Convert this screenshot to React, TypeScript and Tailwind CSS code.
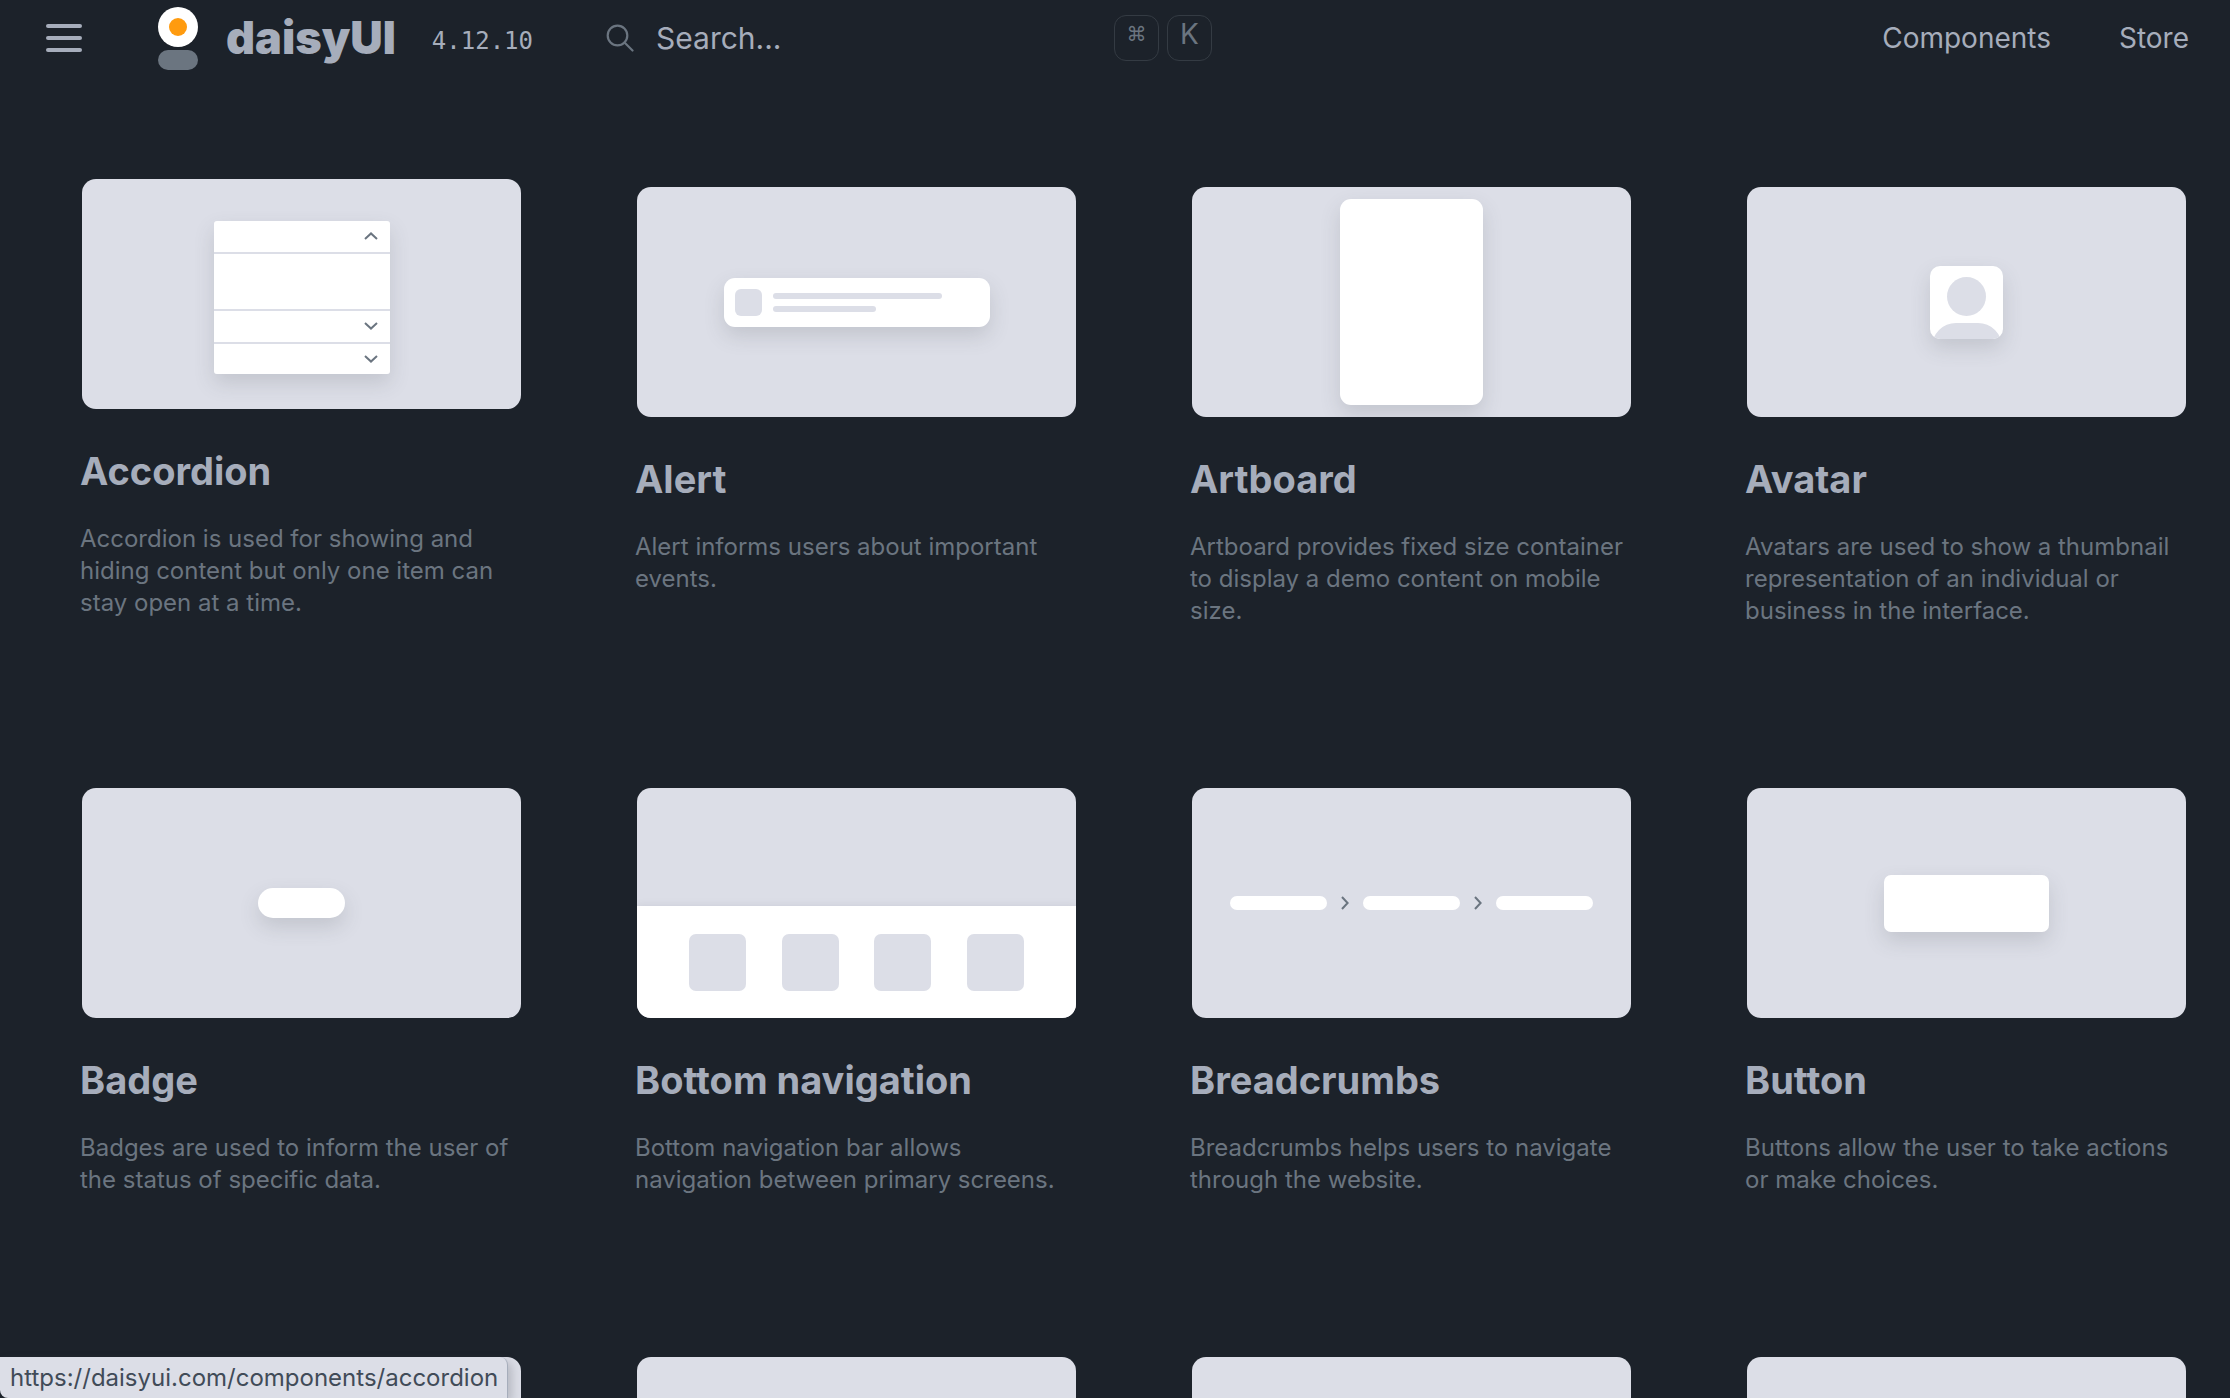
import type { ReactNode } from 'react';
import clsx from 'clsx';

type ComponentItem = {
  name: string;
  description: string;
  preview: ReactNode;
  raised?: boolean;
}

const previewShadow = 'shadow-[0_9px_20px_rgba(70,75,85,0.17)]';

const Chevron = ({ className }: { className?: string }) => (
  <svg viewBox="0 0 14 8" className={clsx('h-2 w-3.5 text-[#6b7580]', className)} fill="none" stroke="currentColor" strokeWidth="2">
    <path d="M1 7 7 1.4 13 7" />
  </svg>
);

const AccordionPreview = () => (
  <div className={clsx('mt-1.5 flex w-44 flex-col gap-0.5 overflow-hidden rounded-[3px] bg-[#dcdee7]', previewShadow)}>
    <div className="flex h-[31px] items-center justify-end bg-white pr-3">
      <Chevron />
    </div>
    <div className="h-[55px] bg-white" />
    <div className="flex h-[31px] items-center justify-end bg-white pr-3">
      <Chevron className="rotate-180" />
    </div>
    <div className="flex h-[30px] items-center justify-end bg-white pr-3">
      <Chevron className="rotate-180" />
    </div>
  </div>
);

const AlertPreview = () => (
  <div className={clsx('flex h-[49px] w-[266px] items-center gap-[11px] rounded-[11px] bg-white px-[11px]', previewShadow)}>
    <div className="size-[27px] rounded-md bg-[#dcdee7]" />
    <div className="flex flex-col gap-[7px]">
      <div className="h-1.5 w-[169px] rounded-sm bg-[#dcdee7]" />
      <div className="h-1.5 w-[103px] rounded-sm bg-[#dcdee7]" />
    </div>
  </div>
);

const AvatarPreview = () => (
  <div className={clsx('flex size-[73px] flex-col items-center gap-[7px] overflow-hidden rounded-[10px] bg-white pt-[11px]', previewShadow)}>
    <div className="size-[39px] shrink-0 rounded-full bg-[#dcdee7]" />
    <div className="h-10 w-[70px] shrink-0 rounded-t-[24px] bg-[#dcdee7]" />
  </div>
);

const BottomNavigationPreview = () => (
  <div className="flex h-28 w-full items-center justify-between self-end bg-white px-[52px] shadow-[0_0_8px_rgba(70,75,90,0.12)]">
    <div className="size-[57px] rounded-[7px] bg-[#dcdee7]" />
    <div className="size-[57px] rounded-[7px] bg-[#dcdee7]" />
    <div className="size-[57px] rounded-[7px] bg-[#dcdee7]" />
    <div className="size-[57px] rounded-[7px] bg-[#dcdee7]" />
  </div>
);

const BreadcrumbsPreview = () => (
  <div className="flex items-center gap-[11px]">
    <div className="h-3.5 w-[97px] rounded-full bg-white" />
    <Chevron className="rotate-90" />
    <div className="h-3.5 w-[97px] rounded-full bg-white" />
    <Chevron className="rotate-90" />
    <div className="h-3.5 w-[97px] rounded-full bg-white" />
  </div>
);

const components: ComponentItem[] = [
  {
    name: 'Accordion',
    description: 'Accordion is used for showing and hiding content but only one item can stay open at a time.',
    preview: <AccordionPreview />,
    raised: true,
  },
  {
    name: 'Alert',
    description: 'Alert informs users about important events.',
    preview: <AlertPreview />,
  },
  {
    name: 'Artboard',
    description: 'Artboard provides fixed size container to display a demo content on mobile size.',
    preview: <div className={clsx('h-[206px] w-[143px] rounded-[11px] bg-white', previewShadow)} />,
  },
  {
    name: 'Avatar',
    description: 'Avatars are used to show a thumbnail representation of an individual or business in the interface.',
    preview: <AvatarPreview />,
  },
  {
    name: 'Badge',
    description: 'Badges are used to inform the user of the status of specific data.',
    preview: <div className={clsx('h-[30px] w-[87px] rounded-full bg-white', previewShadow)} />,
  },
  {
    name: 'Bottom navigation',
    description: 'Bottom navigation bar allows navigation between primary screens.',
    preview: <BottomNavigationPreview />,
  },
  {
    name: 'Breadcrumbs',
    description: 'Breadcrumbs helps users to navigate through the website.',
    preview: <BreadcrumbsPreview />,
  },
  {
    name: 'Button',
    description: 'Buttons allow the user to take actions or make choices.',
    preview: <div className={clsx('h-[57px] w-[165px] rounded-[7px] bg-white', previewShadow)} />,
  },
];

const Preview = ({ children }: { children?: ReactNode }) => (
  <div className="mx-0.5 flex h-[230px] items-center justify-center overflow-hidden rounded-[14px] bg-[#dcdee7]">
    {children}
  </div>
);

const ComponentCard = ({ item }: { item: ComponentItem }) => (
  <a href="#" className={clsx('block transition-transform hover:-translate-y-2', item.raised && '-translate-y-2')}>
    <Preview>{item.preview}</Preview>
    <h2 className="mt-[38px] text-[38px] leading-[48px] font-bold text-[#a6adbb]">
      {item.name}
    </h2>
    <p className="mt-7 text-2xl leading-8 text-[#6b7580]">
      {item.description}
    </p>
  </a>
);

const Logo = () => (
  <svg viewBox="0 0 40 64" className="h-16 w-10" aria-hidden="true">
    <rect y="44" width="40" height="20" rx="10" fill="#6b7580" />
    <circle cx="20" cy="21" r="20" fill="#fff" />
    <circle cx="20" cy="21" r="9" fill="#ff9b0f" />
  </svg>
);

const Header = () => (
  <header className="flex h-19 shrink-0 items-center pr-[41px] pl-[46px] text-[#a6adbb]">
    <button type="button" aria-label="Menu" className="flex w-9 flex-col gap-2">
      <span className="h-1 rounded-full bg-current" />
      <span className="h-1 rounded-full bg-current" />
      <span className="h-1 rounded-full bg-current" />
    </button>
    <a href="#" className="ml-19 flex items-center gap-7">
      <Logo />
      <span className="text-[45px] leading-[60px] font-black">daisyUI</span>
    </a>
    <span className="ml-9 pt-1.5 font-['DejaVu_Sans_Mono',monospace] text-2xl">4.12.10</span>
    <label className="ml-[73px] flex w-[606px] items-center">
      <svg viewBox="0 0 28 28" className="size-7 shrink-0 text-[#6b7580]" fill="none" stroke="currentColor" strokeWidth="2.2" strokeLinecap="round">
        <circle cx="11.5" cy="11.5" r="9.8" />
        <path d="m18.5 18.5 8 8" />
      </svg>
      <input type="search" aria-label="Search" placeholder="Search..." className="ml-[22px] min-w-0 flex-1 bg-transparent text-3xl outline-none placeholder:text-[#a6adbb]" />
      <span className="flex gap-2 text-[#6b7580]">
        <kbd className="flex h-[46px] w-[45px] items-center justify-center rounded-xl border border-[#343b43] pb-2 font-['DejaVu_Sans',sans-serif] text-xl">⌘</kbd>
        <kbd className="flex h-[46px] w-[45px] items-center justify-center rounded-xl border border-[#343b43] pb-2 font-['Inter',sans-serif] text-[28px]">K</kbd>
      </span>
    </label>
    <nav className="ml-auto flex gap-[68px] text-[28px]">
      <a href="#">Components</a>
      <a href="#">Store</a>
    </nav>
  </header>
);

const App = () => {
  return (
    <div className="relative flex h-screen flex-col overflow-hidden bg-[#1c222a] font-['Inter',sans-serif]">
      <Header />
      <main className="grid grid-cols-4 gap-x-28 gap-y-[161px] pt-[111px] pr-[42px] pl-20">
        {components.map((item) => (
          <ComponentCard key={item.name} item={item} />
        ))}
        <Preview />
        <Preview />
        <Preview />
        <Preview />
      </main>

      {/* link target of the hovered card */}
      <div className="absolute bottom-0 left-0 flex h-[41px] w-[508px] items-center rounded-tr-lg rounded-bl-lg border-r border-[#a6adbb] bg-[#dcdee7] px-2.5 text-2xl text-[#414b58] shadow-[4px_4px_10px_rgba(70,75,85,0.25)]">
        https://daisyui.com/components/accordion
      </div>
    </div>
  )
}

export default App
